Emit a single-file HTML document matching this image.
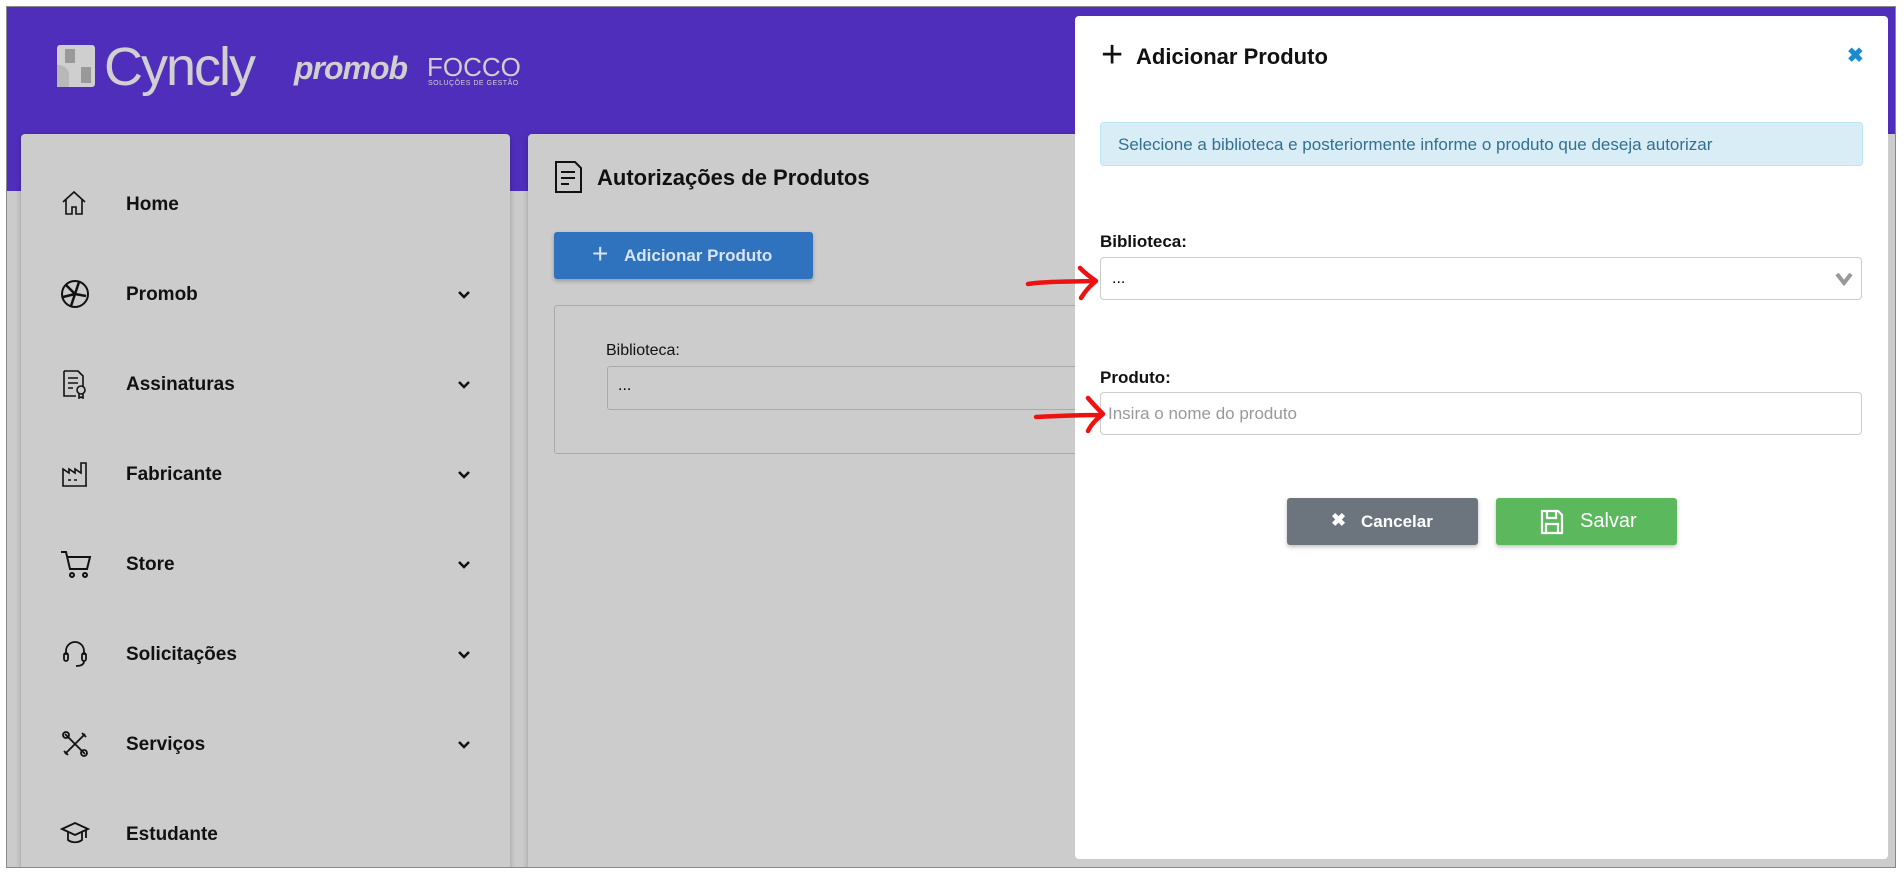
<!DOCTYPE html>
<html><head><meta charset="utf-8"><style>
*{box-sizing:border-box;margin:0;padding:0}
body{width:1904px;height:874px;background:#fff;font-family:"Liberation Sans",sans-serif;position:relative;overflow:hidden}
.frame{position:absolute;left:6px;top:6px;width:1890px;height:862px;border:1px solid #888;background:#cbcbcb;overflow:hidden}
.in{position:absolute;left:-7px;top:-7px;width:1904px;height:874px}
.hdr{position:absolute;left:0;top:0;width:100%;height:191px;background:#4f2ebb}
.logo{position:absolute;color:#d0d0d0}
.side{position:absolute;left:21px;top:134px;width:489px;height:760px;background:#cccccc;border-radius:4px;box-shadow:0 2px 6px rgba(0,0,0,.25)}
.item{position:absolute;left:0;width:100%;height:40px;font-weight:bold;font-size:19px;color:#111}
.item svg{position:absolute;left:39px;top:2px}
.item span{position:absolute;left:105px;top:7px}
.item svg.chev{position:absolute;left:436px;top:13px}
.main{position:absolute;left:528px;top:134px;width:1400px;height:760px;background:#cccccc;border-radius:4px;box-shadow:0 2px 6px rgba(0,0,0,.25)}
.modal{position:absolute;left:1075px;top:16px;width:813px;height:843px;background:#fff;border-radius:4px}
.lbl{position:absolute;font-weight:bold;font-size:17px;color:#111}
.inp{position:absolute;left:25px;width:762px;height:43px;border:1px solid #ccc;border-radius:4px;background:#fff}
.btn{position:absolute;height:47px;border-radius:3px;color:#fff;font-size:18px;box-shadow:0 2px 4px rgba(0,0,0,.25)}
</style></head><body>
<div class="frame"><div class="in">
<div class="hdr"></div>
<svg class="logo" style="left:57px;top:45px" width="38" height="42" viewBox="0 0 38 42"><rect x="0" y="0" width="38" height="42" rx="3" fill="#cfcfcf"/><path d="M8 4h10v14h-10z M24 22h10v16h-10z" fill="#999"/><path d="M0 20c8 0 12 4 12 10v12h-12z" fill="#b8b8b8"/></svg>
<div class="logo" style="left:104px;top:36px;font-size:54px;letter-spacing:-2px">Cyncly</div>
<div class="logo" style="left:294px;top:50px;font-size:32px;font-weight:bold;font-style:italic;letter-spacing:-1px">promob</div>
<div class="logo" style="left:427px;top:52px;font-size:26px;letter-spacing:0">FOCCO</div>
<div class="logo" style="left:428px;top:80px;font-size:7px;letter-spacing:.5px">SOLUÇÕES DE GESTÃO</div>

<div class="side">
<div class="item" style="top:53px"><svg width="28" height="28" viewBox="0 0 28 28" fill="none" stroke="#111" stroke-width="1.6"><path d="M3 13L14 3l11 10M6 10v15h6v-7h4v7h6V10"/></svg><span>Home</span></div>
<div class="item" style="top:143px"><svg width="30" height="30" viewBox="0 0 30 30" fill="none" stroke="#111" stroke-width="2"><circle cx="15" cy="15" r="13"/><path d="M15 15L6 6M15 15l4-12M15 15l11 2M15 15l-4 12M15 15L3 18" stroke-width="2.5"/></svg><span>Promob</span><svg class="chev" width="14" height="10" viewBox="0 0 14 10" fill="none" stroke="#111" stroke-width="2.5"><path d="M2 2l5 5 5-5"/></svg></div>
<div class="item" style="top:233px"><svg width="28" height="30" viewBox="0 0 28 30" fill="none" stroke="#111" stroke-width="1.6"><path d="M4 2h14l5 5v10M4 2v25h12M8 9h10M8 14h10M8 19h5"/><circle cx="21" cy="21" r="4"/><path d="M19 25v4l2-1 2 1v-4"/></svg><span>Assinaturas</span><svg class="chev" width="14" height="10" viewBox="0 0 14 10" fill="none" stroke="#111" stroke-width="2.5"><path d="M2 2l5 5 5-5"/></svg></div>
<div class="item" style="top:323px"><svg width="30" height="30" viewBox="0 0 30 30" fill="none" stroke="#111" stroke-width="1.6"><path d="M3 27V10l6 4v-4l6 4v-4l6 4V4h5v23zM3 27h24M8 21h3M14 21h3"/></svg><span>Fabricante</span><svg class="chev" width="14" height="10" viewBox="0 0 14 10" fill="none" stroke="#111" stroke-width="2.5"><path d="M2 2l5 5 5-5"/></svg></div>
<div class="item" style="top:413px"><svg width="32" height="30" viewBox="0 0 32 30" fill="none" stroke="#111" stroke-width="2"><path d="M1 3h5l4 17h17l3-12H8"/><circle cx="12" cy="26" r="2"/><circle cx="25" cy="26" r="2"/></svg><span>Store</span><svg class="chev" width="14" height="10" viewBox="0 0 14 10" fill="none" stroke="#111" stroke-width="2.5"><path d="M2 2l5 5 5-5"/></svg></div>
<div class="item" style="top:503px"><svg width="30" height="30" viewBox="0 0 30 30" fill="none" stroke="#111" stroke-width="1.8"><path d="M6 16v-4a9 9 0 0118 0v4"/><rect x="4" y="14" width="4" height="8" rx="2"/><rect x="22" y="14" width="4" height="8" rx="2"/><path d="M24 22c0 4-4 5-8 5"/></svg><span>Solicitações</span><svg class="chev" width="14" height="10" viewBox="0 0 14 10" fill="none" stroke="#111" stroke-width="2.5"><path d="M2 2l5 5 5-5"/></svg></div>
<div class="item" style="top:593px"><svg width="30" height="30" viewBox="0 0 30 30" fill="none" stroke="#111" stroke-width="1.8"><path d="M5 5l20 20M25 5L5 25"/><circle cx="6" cy="6" r="3"/><circle cx="24" cy="24" r="3"/><path d="M22 4l4 4M4 22l4 4"/></svg><span>Serviços</span><svg class="chev" width="14" height="10" viewBox="0 0 14 10" fill="none" stroke="#111" stroke-width="2.5"><path d="M2 2l5 5 5-5"/></svg></div>
<div class="item" style="top:683px"><svg width="30" height="30" viewBox="0 0 30 30" fill="none" stroke="#111" stroke-width="1.8"><path d="M2 10l13-6 13 6-13 6zM8 13v8c4 3 10 3 14 0v-8M26 11v8"/></svg><span>Estudante</span></div>
</div>

<div class="main">
<svg style="position:absolute;left:26px;top:26px" width="30" height="34" viewBox="0 0 30 34" fill="none" stroke="#111" stroke-width="2"><path d="M2 2h19l6 6v24H2z"/><path d="M7 12h14M7 18h14M7 24h8"/></svg>
<div style="position:absolute;left:69px;top:31px;font-weight:bold;font-size:22px;color:#111">Autorizações de Produtos</div>
<div class="btn" style="left:26px;top:98px;width:259px;background:#2f72be;color:#d8e4f2;font-size:17px;font-weight:bold"><span style="position:absolute;left:38px;top:6px;font-size:28px;font-weight:normal">+</span><span style="position:absolute;left:70px;top:14px">Adicionar Produto</span></div>
<div style="position:absolute;left:26px;top:171px;width:800px;height:149px;border:1px solid #aaa;border-radius:3px"></div>
<div class="lbl" style="left:78px;top:208px;font-size:16px;font-weight:normal">Biblioteca:</div>
<div style="position:absolute;left:79px;top:232px;width:700px;height:44px;border:1px solid #aaa;border-radius:3px;padding:10px 10px;font-size:16px">...</div>
</div>

<div class="modal">
<div style="position:absolute;left:26px;top:20px;font-size:38px;font-weight:200;line-height:38px;color:#111">+</div>
<div style="position:absolute;left:61px;top:28px;font-weight:bold;font-size:22px;color:#111">Adicionar Produto</div>
<div style="position:absolute;left:772px;top:27px;font-weight:bold;font-size:20px;color:#1a8bd0">✖</div>
<div style="position:absolute;left:25px;top:106px;width:763px;height:44px;background:#d9edf7;border:1px solid #bce8f1;border-radius:4px;color:#31708f;font-size:17px;padding:12px 17px">Selecione a biblioteca e posteriormente informe o produto que deseja autorizar</div>
<div class="lbl" style="left:25px;top:216px">Biblioteca:</div>
<div class="inp" style="top:241px;font-size:16px;padding:12px 11px">...<svg style="position:absolute;right:8px;top:14px" width="18" height="14" viewBox="0 0 18 14" fill="none" stroke="#999" stroke-width="4"><path d="M2 2l7 9 7-9"/></svg></div>
<div class="lbl" style="left:25px;top:352px">Produto:</div>
<div class="inp" style="top:376px;font-size:17px;color:#999;padding:11px 7px">Insira o nome do produto</div>
<div class="btn" style="left:212px;top:482px;width:191px;background:#6c757d;font-weight:bold"><span style="position:absolute;left:44px;top:12px;font-size:18px">✖</span><span style="position:absolute;left:74px;top:14px;font-size:17px">Cancelar</span></div>
<div class="btn" style="left:421px;top:482px;width:181px;background:#5cb85c"><svg style="position:absolute;left:44px;top:11px" width="24" height="26" viewBox="0 0 24 26" fill="none" stroke="#fff" stroke-width="2.2"><path d="M2 2h16l4 4v18H2z M7 2v7h9V2 M6 24v-9h12v9"/></svg><span style="position:absolute;left:84px;top:12px;font-size:20px">Salvar</span></div>
</div>

<svg style="position:absolute;left:1020px;top:258px" width="100" height="180" viewBox="0 0 100 180" fill="none" stroke="#e11" stroke-width="4.5" stroke-linecap="round" stroke-linejoin="round"><path d="M8 26c20-3 40-2 66-3M60 10c6 6 10 9 16 13-6 5-10 9-15 17"/><path d="M16 159c20-1 40-2 66-2M68 140c5 6 10 11 15 16-6 5-11 9-15 17"/></svg>
</div></div>
</body></html>
